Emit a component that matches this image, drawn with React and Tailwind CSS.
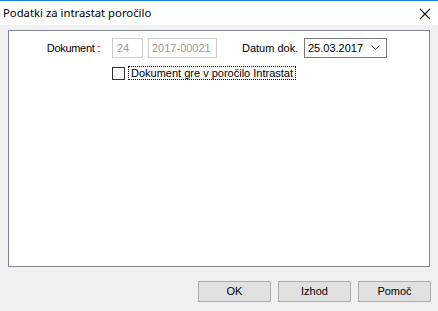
export default function App() {
  const ui = { fontFamily: '"Liberation Sans", Arial, sans-serif' };

  return (
    <div className="w-[438px] h-[311px] bg-[#f0f0f0] flex flex-col overflow-hidden" style={ui}>
      {/* Title bar */}
      <div className="h-[25px] bg-white border-t border-[#1883d7] flex items-center justify-between pl-[3px] pr-[7px]">
        <span className="text-[11.3px] text-black" style={{ fontFamily: '"Noto Sans", "Open Sans", sans-serif' }}>
          Podatki za intrastat poročilo
        </span>
        <svg width="12" height="12" viewBox="0 0 12 12" className="mt-[2px]">
          <path d="M1 1 L11 11 M11 1 L1 11" stroke="#111" strokeWidth="1.1" fill="none" />
        </svg>
      </div>

      {/* Panel */}
      <div className="mx-[8px] mt-[5px] h-[237px] bg-white border border-[#828790] pt-[7px] text-[11px]">
        <div className="flex items-center">
          <span className="w-[91px] text-right text-black tracking-[-0.3px]">Dokument :</span>
          <div className="ml-[12px] w-[31px] h-[20px] border border-[#cccccc] flex items-center pl-[4px] text-[#9a9a9a]">
            24
          </div>
          <div className="ml-[5px] w-[69px] h-[20px] border border-[#cccccc] flex items-center pl-[3px] text-[#9a9a9a]">
            2017-00021
          </div>
          <span className="ml-[25px] w-[62px] text-black">Datum dok.</span>
          <div className="w-[83px] h-[20px] border border-[#7a7a7a] flex items-center justify-between pl-[3px] pr-[6px] text-black">
            <span>25.03.2017</span>
            <svg width="9" height="6" viewBox="0 0 9 6">
              <path d="M0.5 0.5 L4.5 4.5 L8.5 0.5" stroke="#555" strokeWidth="1" fill="none" />
            </svg>
          </div>
        </div>

        <div className="flex items-center mt-[8px] ml-[103px]">
          <div className="w-[13px] h-[13px] border border-[#333333] bg-white" />
          <span className="ml-[3px] border border-dotted border-black px-[2px] leading-[12px] text-black">
            Dokument gre v poročilo Intrastat
          </span>
        </div>
      </div>

      {/* Buttons */}
      <div className="flex justify-end gap-[7px] pr-[7px] mt-[14px] text-[11px]">
        <button className="w-[73px] h-[21px] bg-[#e1e1e1] border border-[#adadad] text-black">OK</button>
        <button className="w-[73px] h-[21px] bg-[#e1e1e1] border border-[#adadad] text-black">Izhod</button>
        <button className="w-[73px] h-[21px] bg-[#e1e1e1] border border-[#adadad] text-black">Pomoč</button>
      </div>
    </div>
  );
}
